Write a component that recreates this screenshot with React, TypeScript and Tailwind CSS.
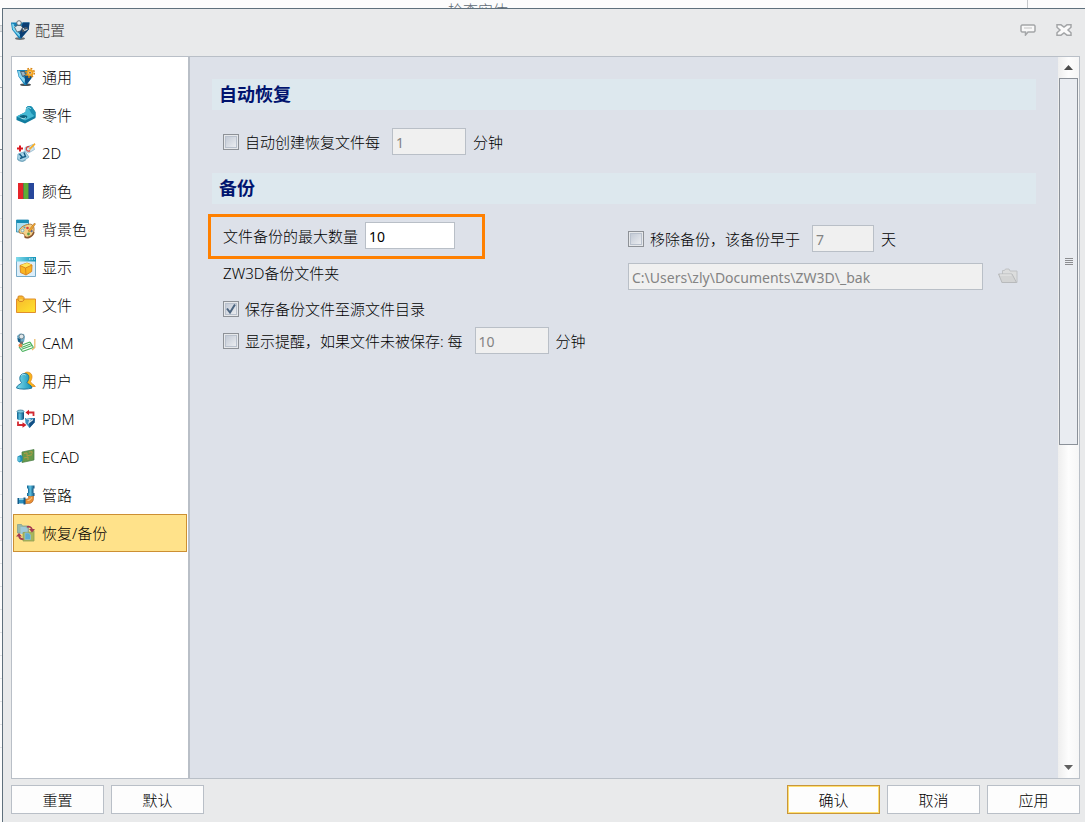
import { useState } from "react";
import type { ComponentProps, ReactNode } from "react";
import { cx } from "class-variance-authority";

function Icon({ children }: { children: ReactNode }) {
  return (
    <svg viewBox="0 0 20 20" className="h-5 w-5 shrink-0" aria-hidden="true">
      {children}
    </svg>
  );
}

// Gradients shared by all icons
function IconDefs() {
  return (
    <svg className="absolute h-0 w-0" aria-hidden="true">
      <defs>
        <linearGradient id="aqua" x1="0" y1="0" x2="1" y2="0">
          <stop offset="0" stopColor="#83dcec" />
          <stop offset="1" stopColor="#0f92b8" />
        </linearGradient>
        <linearGradient id="gold" x1="0" y1="0" x2="1" y2="1">
          <stop offset="0" stopColor="#f7b92c" />
          <stop offset="1" stopColor="#ffe52e" />
        </linearGradient>
        <linearGradient id="tank" x1="0" y1="0" x2="1" y2="0">
          <stop offset="0" stopColor="#0f5f8c" />
          <stop offset="0.4" stopColor="#5fc4e4" />
          <stop offset="1" stopColor="#0b4c78" />
        </linearGradient>
      </defs>
    </svg>
  );
}

function LogoIcon() {
  return (
    <Icon>
      <ellipse cx="9" cy="18.600" rx="5" ry="1.300" fill="#6b6f72" />
      <path d="M0 2.500h18.500l-.8 7L10 18.500H8L1 9.500z" fill="#1180b8" />
      <path d="M12 2.500h6.500l-.8 7L10 18.500l-2-5z" fill="#0b3f74" />
      <path d="M1 3.500l4 2-1 3.500 5 4-.3 4L1.800 9.500z" fill="#7fd8f2" />
      <path d="M3 5l4 2-1 3 3 4" fill="none" stroke="#0f5f96" strokeWidth="1" />
      <circle cx="8" cy="3" r="2.300" fill="#eef2f4" stroke="#5c6870" strokeWidth=".9" />
      <path d="M3.500 7l3-1.500h3.500l1.500 2-2 3.500-3.500 1z" fill="#dfe6ea" stroke="#46545e" strokeWidth=".7" />
      <path d="M10.500 9l4-2 2 .5v2.500l-5 2.500z" fill="#4c5964" />
      <path d="M12 8l1.500 2.500 3-1.200" fill="none" stroke="#e3edf2" strokeWidth="1" />
    </Icon>
  );
}

function GeneralIcon() {
  return (
    <Icon>
      <ellipse cx="9.500" cy="17.800" rx="5.500" ry="1.300" fill="#4f5356" />
      <path d="M1 3h15l1 4-1.500 4-5 7H8.500L2.500 9.500z" fill="#1685b9" />
      <path d="M9 9l7-1-.8 3.500-5 6.500-1.500-4z" fill="#0d4f86" />
      <path d="M2 3.500l5 2-1 3 3 3.500-.5 4L2.800 9z" fill="#8bd6ef" />
      <path d="M4.500 4.500h4l1 3.500-3 1.500z" fill="#9db6c2" stroke="#3d5566" strokeWidth=".8" />
      <circle cx="14" cy="5.800" r="4.300" fill="none" stroke="#d88412" strokeWidth="1.600" strokeDasharray="1.800 1.577" />
      <circle cx="14" cy="5.800" r="2.600" fill="#ffe3a0" stroke="#f2a21f" strokeWidth="1.900" />
      <circle cx="14" cy="5.800" r="1" fill="#8b6a49" />
    </Icon>
  );
}

function PartIcon() {
  return (
    <Icon>
      <path d="M.5 11.500L9.500 7 10 3.500C10.500.5 14 .2 16 2l3.500 5v6L9 18.500.5 15z" fill="#117d9f" />
      <path d="M.5 11.500L9.500 7 10 3.500C10.500.5 14 .2 16 2l2.500 5v4L9 15.500z" fill="#45b9d4" />
      <path d="M10 3.500C10.500.5 14 .2 16 2l3.500 5v5l-4-3.500L13 4z" fill="#1c8fb1" />
      <path d="M10.500 4c1-2 3.500-1.500 4.500 0" fill="none" stroke="#b5eaf4" strokeWidth="1" />
      <ellipse cx="7.500" cy="11.800" rx="3.800" ry="1.900" fill="#0d6480" />
      <path d="M4.500 12.500c1.500 1.500 4 1.500 5.500 0" fill="none" stroke="#b5eaf4" strokeWidth=".9" />
    </Icon>
  );
}

function SketchIcon() {
  return (
    <Icon>
      <path d="M1 5.500h6M4 2.500v6" stroke="#d9151e" strokeWidth="2" />
      <path d="M9 4.500l8-3 1.500 5-6 3.500-3.500-2z" fill="#cfe4ee" stroke="#87b0c6" strokeWidth=".7" />
      <path d="M13.500 4a2.200 2.200 0 1 0 .5 3.500" fill="none" stroke="#d33f36" strokeWidth="1.200" />
      <path d="M13 5.500L18.500 0 19.500 1.500 14 7z" fill="#f7ac28" />
      <path d="M2 11l7-2.500 4 5.500-6.500 4.500L1.500 16z" fill="#a8d4e8" stroke="#6fa8c4" strokeWidth=".8" />
      <path d="M3.500 11l3 3.500 3-1-1.500-4M6.500 14.500l-2.500 1" fill="none" stroke="#145b85" strokeWidth="1.400" />
      <path d="M1.500 16c1.500 2.500 5 3 8 1" fill="none" stroke="#79a9bf" strokeWidth="1.200" />
    </Icon>
  );
}

function ColorIcon() {
  return (
    <Icon>
      <path d="M2 2h5.500v16H2z" fill="#e5242a" />
      <path d="M7.500 2h5v16h-5z" fill="#5eae35" />
      <path d="M12.500 2H18v16h-5.500z" fill="#28479b" />
      <path d="M7.500 2v16M12.500 2v16" stroke="#34553b" strokeWidth=".6" />
    </Icon>
  );
}

function BackgroundIcon() {
  return (
    <Icon>
      <path d="M.5 1h12v12H.5z" fill="#a9dff0" stroke="#2386ae" strokeWidth=".8" />
      <path d="M.5 1h12v3H.5z" fill="#168eb6" />
      <path d="M11.500 5.500c5-1.500 7 2 6.500 6s-4 7-7.500 6.800c-3-.3-1-3.300-3.500-3.800-2-.5-4 .5-4-2 0-3 4-6 8.500-7z" fill="#f4d089" stroke="#a66c2c" strokeWidth=".9" />
      <path d="M8.500 17.500c2 2.500 8 1 9.500-4.500" fill="none" stroke="#89552e" strokeWidth="1.400" />
      <circle cx="6.500" cy="11.500" r="1.400" fill="#f2f2e9" stroke="#60a7bd" strokeWidth=".8" />
      <circle cx="11.500" cy="9" r="1.300" fill="#d8423d" />
      <circle cx="8.500" cy="8.500" r="1" fill="#4e9fc0" />
      <circle cx="15.500" cy="12" r="1.200" fill="#4e68a8" />
      <circle cx="12.500" cy="15" r="1.400" fill="#5b9f4a" />
      <path d="M12 12L18.500 4l1 1-5.500 8z" fill="#f4a52b" stroke="#a66b23" strokeWidth=".5" />
    </Icon>
  );
}

function DisplayIcon() {
  return (
    <Icon>
      <path d="M.5.500h19v19H.5z" fill="#dceef9" stroke="#76abc9" />
      <path d="M0 0h20v4.500H0z" fill="url(#aqua)" />
      <path d="M13 2h1.500M15.500 2H17M18 2h1" stroke="#fff" strokeWidth="1.200" />
      <path d="M4 8.500l7-2.500 5 2-.3 6.500L10 18l-5.500-2.500z" fill="#f9b522" stroke="#d7801c" strokeWidth=".9" />
      <path d="M4 8.500l7-2.500 5 2-6.500 3z" fill="#ffe65b" />
      <path d="M4 8.500l5.500 2.500L16 8M9.500 11l.5 7" fill="none" stroke="#d7801c" strokeWidth=".9" />
    </Icon>
  );
}

function FolderIcon() {
  return (
    <Icon>
      <path d="M.5 4h19v13.500H.5z" fill="url(#gold)" stroke="#e18e2c" />
      <path d="M2.500 1h4l1.500 1.500V5L6.500 6.500h-3L2 5V2z" fill="#f6b72e" stroke="#d48624" />
      <path d="M3.500 5h3" stroke="#ffe27b" />
    </Icon>
  );
}

function CamIcon() {
  return (
    <Icon>
      <path d="M1 3l3-2.500 4 .5 1 3-1 5-3 1.500L2 8z" fill="#6fa9c4" />
      <path d="M1.500 5l3 1v4L2 8.500z" fill="#125b85" />
      <circle cx="5.500" cy="3.500" r="2.300" fill="#dfe7ea" stroke="#66757e" strokeWidth=".7" />
      <path d="M4 8.500h3v2.500H4z" fill="#656f75" />
      <circle cx="4.500" cy="12.500" r="2" fill="#ec874d" />
      <path d="M6 12l8-3M5.500 14.500l9-3.500M5 16.500l11-4M6.500 18.500l11-4M3 14l3.500 4.500M14 9l3.500 5.500" fill="none" stroke="#48b15b" strokeWidth="1.100" />
      <path d="M18.800 6v8.500L16 17" fill="none" stroke="#edbd6d" strokeWidth="1.300" />
    </Icon>
  );
}

function UserIcon() {
  return (
    <Icon>
      <path d="M8 3c1-3 8-2.500 8 2.500 0 2.500-1 4-1.500 5 0 2 4 3 4.800 5h-7z" fill="#f8b41c" stroke="#e28a1f" strokeWidth=".8" />
      <path d="M8 2.500c4.500-.5 5.500 3 4.500 6-.3 1.300-1 2-1.500 3 .5 2 4.500 2 5 5.500-4 1.500-12 1.500-15.500 0 .5-3.500 4.500-3.500 5-5.500-3-3-2-8.500 2.500-9z" fill="url(#aqua)" stroke="#176f98" strokeWidth=".9" />
      <path d="M5.500 4.500c1-1.500 3-1.500 4-.5" fill="none" stroke="#bceaf4" />
    </Icon>
  );
}

function PdmIcon() {
  return (
    <Icon>
      <path d="M1 2.500v7c0 2 7 2 7 0v-7z" fill="url(#tank)" />
      <ellipse cx="4.500" cy="2.500" rx="3.500" ry="1.500" fill="#83cbe2" stroke="#176080" strokeWidth=".6" />
      <path d="M17.500 7V3.500H12M2 12.500V16h5.500" fill="none" stroke="#d22a32" strokeWidth="1.800" />
      <path d="M13 .8v5.400L9.500 3.500zM6.500 13.300v5.400L10.500 16z" fill="#cf1f28" />
      <path d="M9 9h10l-.5 4.500-5 5.500-4-5z" fill="#3c8fbe" />
      <path d="M13 12l6-3-.5 4.500-5 5.500z" fill="#124f84" />
      <path d="M10 9.500l4 1-1 3 4-3" fill="none" stroke="#d2e5ed" strokeWidth="1.200" />
    </Icon>
  );
}

function EcadIcon() {
  return (
    <Icon>
      <path d="M6 5l12-2.500v10.500L6 15.500z" fill="#67994a" stroke="#467b43" strokeWidth=".7" />
      <path d="M8 6.500l3-.6v3l5-1.200M8 11l4-1 0 3M13 5.200l3-.6v2" fill="none" stroke="#b49a47" strokeWidth="1" />
      <path d="M1.500 9.500l3-1.500 2 1v5l-3 1.500-2-1.500z" fill="#208db8" />
      <ellipse cx="3" cy="12" rx="1.500" ry="2.500" fill="#59bdd8" />
    </Icon>
  );
}

function PipeIcon() {
  return (
    <Icon>
      <path d="M12.500 11h5v2.500c0 3-2 5-5 5H9v-4.500h1.500c1.500 0 2-.5 2-2z" fill="#e98f34" stroke="#a85f29" strokeWidth=".6" />
      <path d="M12 1.500h5.500v9c-1.500 1-4 1-5.500 0z" fill="url(#tank)" />
      <path d="M11 .5h7.500v3H11zM11 8h7.500v3H11z" fill="url(#tank)" />
      <path d="M2.500 13.500H8v5H2.500z" fill="#2b8fbd" />
      <path d="M7.500 12.500h2v7h-2zM1.500 13h1.500v6H1.500z" fill="#145c89" />
      <path d="M3 14.500h4.500" stroke="#83cee6" />
      <path d="M11.500 15.500c2 0 3.500-1 4-3" fill="none" stroke="#ffd79a" />
    </Icon>
  );
}

function BackupIcon() {
  return (
    <Icon>
      <path d="M1.500 1.500h4l1 1.500h6V10h-11z" fill="#98b9aa" stroke="#84a293" strokeWidth=".8" />
      <path d="M4.500 4h5l2 2v5h-7z" fill="#9fc9da" />
      <path d="M7 9.500l9-.5 2-1.500V18H7z" fill="#a8b65a" stroke="#91a055" strokeWidth=".8" />
      <path d="M9 10h3.500l2 2v4.500H9z" fill="#5eadd0" stroke="#8fc3d6" strokeWidth=".7" />
      <path d="M11 4c2-1 4.500 0 5 2.500M7.500 16c-2.500.5-4-.5-4.500-3" fill="none" stroke="#a33a50" strokeWidth="1.600" />
      <path d="M13 6h6L16 9.500zM0 13.500H6L3 10z" fill="#a33a50" />
    </Icon>
  );
}

const pages = [
  { name: "通用", icon: GeneralIcon },
  { name: "零件", icon: PartIcon },
  { name: "2D", icon: SketchIcon },
  { name: "颜色", icon: ColorIcon },
  { name: "背景色", icon: BackgroundIcon },
  { name: "显示", icon: DisplayIcon },
  { name: "文件", icon: FolderIcon },
  { name: "CAM", icon: CamIcon },
  { name: "用户", icon: UserIcon },
  { name: "PDM", icon: PdmIcon },
  { name: "ECAD", icon: EcadIcon },
  { name: "管路", icon: PipeIcon },
  { name: "恢复/备份", icon: BackupIcon },
];

function CheckBox({ label, checked = false }: { label: string; checked?: boolean }) {
  return (
    <label className="flex shrink-0 items-center gap-1.5 whitespace-nowrap">
      <span className="grid h-4 w-4 shrink-0">
        <input type="checkbox" defaultChecked={checked} className="peer col-start-1 row-start-1 h-4 w-4 appearance-none border border-[#8d9197] bg-linear-to-br from-[#bcc4d1] to-[#f2f3f5] shadow-[inset_0_0_0_1px_#e6e8eb,inset_0_0_0_2px_#b9c1cd]" />
        <svg viewBox="0 0 16 16" className="pointer-events-none invisible col-start-1 row-start-1 h-4 w-4 peer-checked:visible" aria-hidden="true">
          <path d="M4 7.500l3 4 5-8" fill="none" stroke="#4c6580" strokeWidth="2" />
        </svg>
      </span>
      {label}
    </label>
  );
}

function TextBox({ className, ...props }: ComponentProps<"input">) {
  return <input type="text" className={cx("h-[27px] min-w-0 border border-[#b9bfc7] bg-white px-[3px] pt-px text-sm font-normal text-black disabled:bg-[#f0f0f0] disabled:text-[#838383]", className)} {...props} />;
}

function SectionTitle({ children }: { children: ReactNode }) {
  return <h2 className="flex h-[31px] items-center bg-[#dde8ee] px-[7px] pb-px text-lg leading-5 font-bold text-[#00146e]">{children}</h2>;
}

function DialogButton({ children, primary }: { children: ReactNode; primary?: boolean }) {
  return (
    <button className={cx("h-[29px] w-[93px] shrink-0 border bg-[#fdfdfd] text-black", primary ? "border-[#c8963c] shadow-[inset_0_0_0_1px_#ffe070]" : "border-[#b9bfc7]")}>
      {children}
    </button>
  );
}

function ScrollBar() {
  return (
    <div className="flex w-[21px] shrink-0 flex-col bg-linear-to-r from-[#eeeeee] via-[#fdfdfd] to-[#f6f6f6] pr-px pl-px">
      <button aria-label="向上滚动" className="grid h-[21px] place-items-center">
        <svg viewBox="0 0 9 5" className="h-[5px] w-[9px]"><path d="M0 5L4.500 0 9 5z" fill="#4b4b4b" /></svg>
      </button>
      <div className="min-h-0 flex-1">
        <div className="grid h-[54%] place-items-center border border-[#8b9199] bg-[#e9ecf1]">
          <svg viewBox="0 0 8 7" className="h-[7px] w-2"><path d="M0 .5h8M0 2.500h8M0 4.500h8M0 6.500h8" stroke="#8c8d90" /></svg>
        </div>
      </div>
      <button aria-label="向下滚动" className="grid h-[21px] place-items-center">
        <svg viewBox="0 0 9 5" className="h-[5px] w-[9px]"><path d="M0 0h9L4.500 5z" fill="#606060" /></svg>
      </button>
    </div>
  );
}

function BackupPage() {
  return (
    <main className="min-w-0 flex-1 overflow-hidden bg-[#dde1e9] p-[22px] text-black">
      <SectionTitle>自动恢复</SectionTitle>
      <div className="flex items-center py-[18px] pl-[11px]">
        <CheckBox label="自动创建恢复文件每" />
        <TextBox aria-label="恢复间隔" className="ml-3 w-[74px]" defaultValue="1" disabled />
        <span className="ml-[7px]">分钟</span>
      </div>

      <SectionTitle>备份</SectionTitle>
      <div className="grid grid-cols-[405px_1fr] pt-[18px] pl-[11px]">
        <div className="flex flex-col items-start">
          <div className="relative flex items-center gap-[7px]">
            <label htmlFor="max-backups">文件备份的最大数量</label>
            <TextBox id="max-backups" className="w-[90px]" defaultValue="10" />
            <span className="pointer-events-none absolute -top-2 -right-[30px] -bottom-2.5 -left-[15px] border-3 border-[#ff8000]" />
          </div>
          <label htmlFor="backup-folder" className="mt-3.5">ZW3D备份文件夹</label>
          <div className="mt-4">
            <CheckBox label="保存备份文件至源文件目录" checked />
          </div>
          <div className="mt-2 flex items-center">
            <CheckBox label="显示提醒，如果文件未被保存: 每" />
            <TextBox aria-label="提醒间隔" className="ml-3 w-[74px]" defaultValue="10" disabled />
            <span className="ml-[7px]">分钟</span>
          </div>
        </div>
        <div className="flex min-w-0 flex-col gap-[11px] pt-[3px]">
          <div className="flex items-center">
            <CheckBox label="移除备份，该备份早于" />
            <TextBox aria-label="保留天数" className="ml-3 w-[62px]" defaultValue="7" disabled />
            <span className="ml-[7px]">天</span>
          </div>
          <div className="flex items-center gap-[15px] pr-[18px]">
            <TextBox id="backup-folder" className="flex-1" defaultValue="C:\Users\zly\Documents\ZW3D\_bak" disabled />
            <button aria-label="浏览" disabled>
              <Icon>
                <path d="M4.500 6V3.500h2l1-1.500h3.500l1 2h7v11.500H4z" fill="#dcdddd" stroke="#c0c2c4" />
                <path d="M.5 7h13.500l4.500 8.500H4z" fill="#d3d4d4" stroke="#b8babc" />
                <path d="M2 8h11.500" stroke="#e8e8e8" />
              </Icon>
            </button>
          </div>
        </div>
      </div>
    </main>
  );
}

// Sliver of the main window's tree that shows left of the dialog
function WindowEdge() {
  return (
    <div className="flex w-0.5 shrink-0 flex-col pt-[17px]" aria-hidden="true">
      <div className="h-[7px] border-y border-[#c5c8cb] bg-[#e4e5e6]" />
      <div className="h-[25px] border-b border-[#d5d7d9]" />
      <div className="h-[31px] border-b border-[#b0b4b8]" />
      <div className="h-[31px] border-b border-[#b0b4b8]" />
      <div className="h-[31px] border-b border-[#8a9096]" />
      {Array.from({ length: 26 }, (_, i) => (
        <div key={i} className="h-[23px] border-b border-[#e2e3e5]" />
      ))}
    </div>
  );
}

export default function App() {
  const [page, setPage] = useState("恢复/备份");

  return (
    <div className="relative flex h-screen flex-col overflow-hidden bg-[#fcfcfc] font-['Noto_Sans','Noto_Sans_CJK_SC',sans-serif] text-[15px] leading-5 font-light">
      <IconDefs />
      {/* edge of the main window behind the dialog */}
      <div className="flex h-2 shrink-0 justify-between overflow-hidden pr-[57px] pl-[448px] text-[#5f6b75]">
        <span>检查实体</span>
        <span className="w-px bg-[#c5c8cb]" />
      </div>

      <div className="flex min-h-0 flex-1">
        <WindowEdge />
        <div className="flex min-w-0 flex-1 flex-col border-t border-l border-[#5f707c] bg-[#e9eaeb] pr-[5px] pb-2 pl-2">
          <header className="flex h-[47px] shrink-0 items-center gap-1 pr-2 pb-[5px] text-[#3c3c3c]">
            <LogoIcon />
            <h1 className="flex-1">配置</h1>
            <div className="flex items-center gap-5">
              <button aria-label="反馈">
                <svg viewBox="0 0 16 12" className="h-3 w-4"><path d="M2 1h12l1 1v5l-1 1H8l-2.500 3V8H2L1 7V2z" fill="#f8f8f8" stroke="#a4a6a8" strokeWidth="1.500" /><path d="M4 4h8" stroke="#c2c2c2" /></svg>
              </button>
              <button aria-label="关闭">
                <svg viewBox="0 0 16 12" className="h-3 w-4"><path d="M1 .8h4l3 2.200L11 .8h4v2.400L12 6l3 2.800v2.400h-4L8 9l-3 2.200H1V8.800L4 6 1 3.200z" fill="#fafafa" stroke="#a4a6a8" strokeWidth="1.500" /></svg>
              </button>
            </div>
          </header>

          <div className="flex min-h-0 flex-1 border border-[#b9bfc7]">
            <nav className="flex w-[178px] shrink-0 flex-col border-r-2 border-[#b9bfc7] bg-white p-px">
              {pages.map(({ name, icon: PageIcon }) => (
                <button
                  key={name}
                  onClick={() => setPage(name)}
                  className={cx("flex h-[38px] items-center gap-1.5 border px-0.5 text-left text-black", page === name ? "border-[#cc8f33] bg-[#ffe28a]" : "border-transparent")}
                >
                  <PageIcon />
                  {name}
                </button>
              ))}
            </nav>
            <BackupPage />
            <ScrollBar />
          </div>

          <footer className="flex shrink-0 gap-[7px] pt-1.5">
            <DialogButton>重置</DialogButton>
            <DialogButton>默认</DialogButton>
            <div className="flex-1" />
            <DialogButton primary>确认</DialogButton>
            <DialogButton>取消</DialogButton>
            <DialogButton>应用</DialogButton>
          </footer>
        </div>
      </div>
    </div>
  );
}
